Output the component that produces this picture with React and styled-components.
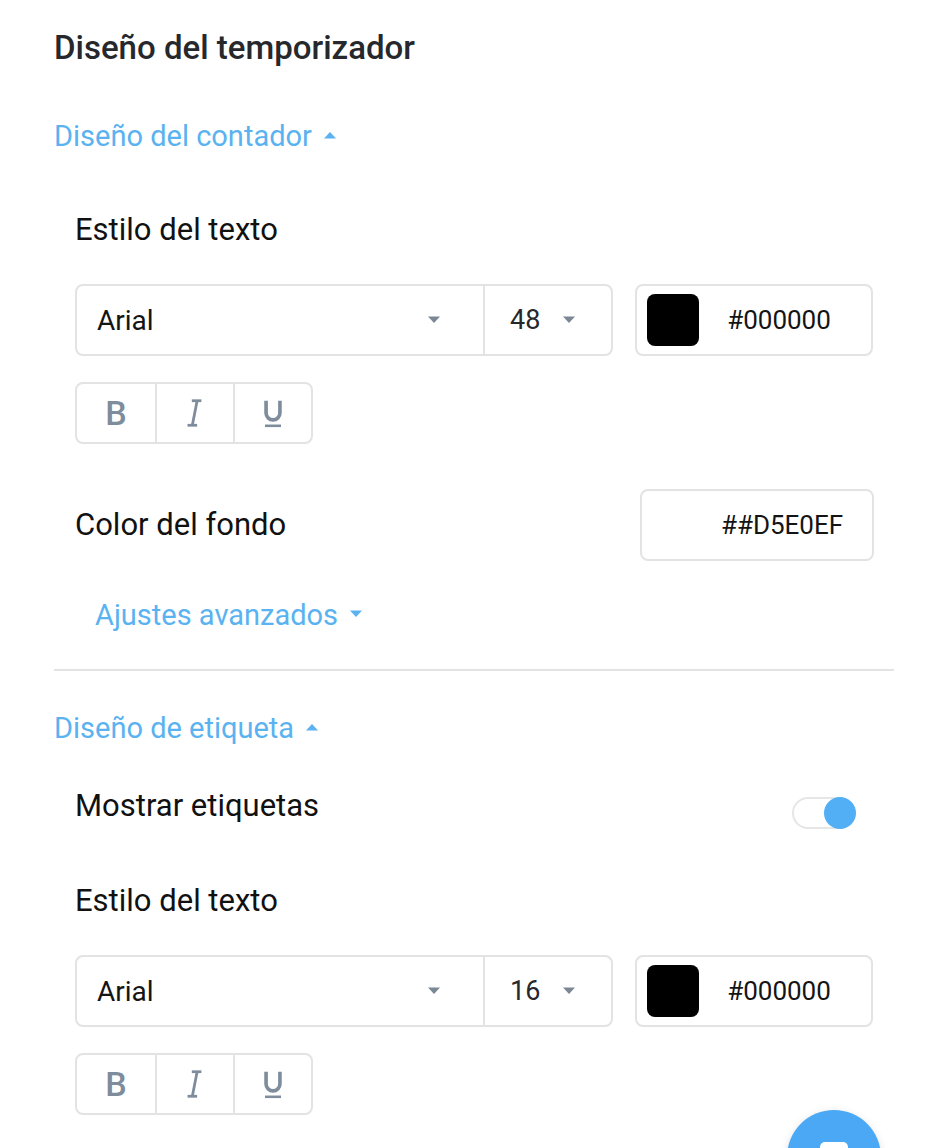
import React, { useState } from 'react'
import styled, { createGlobalStyle } from 'styled-components'

const GlobalStyle = createGlobalStyle`
	body {
		margin: 0;
		background: #ffffff;
		font-family: Roboto, "Liberation Sans", sans-serif;
		color: #141414;
	}
`

function Caret({ up, color }) {
	return (
		<svg width="14" height="8" viewBox="0 0 14 8">
			{up ? (
				<path d="M1 7.5 L7 1 L13 7.5 Z" fill={color} />
			) : (
				<path d="M1 0.5 L13 0.5 L7 7 Z" fill={color} />
			)}
		</svg>
	)
}

function ItalicIcon() {
	return (
		<svg width="32" height="32" viewBox="0 0 30 30" fill="none" stroke="#7e8c9c" strokeWidth="2.6">
			<path d="M12 3.5 H21" />
			<path d="M8 26.5 H17" />
			<path d="M17 3.5 L12.5 26.5" />
		</svg>
	)
}

function UnderlineIcon() {
	return (
		<svg width="32" height="32" viewBox="0 0 30 30" fill="none" stroke="#7e8c9c" strokeWidth="3.4">
			<path d="M8.5 3.5 V15 a6.5 6.5 0 0 0 13 0 V3.5" />
			<path d="M7.5 27 H22.5" strokeWidth="2.4" />
		</svg>
	)
}

function FontRow({ size }) {
	return (
		<StyledRow>
			<StyledSelectGroup>
				<StyledSelect>
					<span>Arial</span>
					<Caret color="#7c8795" />
				</StyledSelect>
				<StyledSizeSelect>
					<span>{size}</span>
					<Caret color="#7c8795" />
				</StyledSizeSelect>
			</StyledSelectGroup>
			<StyledColorBox width={238}>
				<StyledSwatch color="#000000" />
				<StyledColorText>#000000</StyledColorText>
			</StyledColorBox>
		</StyledRow>
	)
}

function FormatButtons() {
	return (
		<StyledFormatGroup>
			<StyledFormatButton>B</StyledFormatButton>
			<StyledFormatButton>
				<ItalicIcon />
			</StyledFormatButton>
			<StyledFormatButton>
				<UnderlineIcon />
			</StyledFormatButton>
		</StyledFormatGroup>
	)
}

function App() {
	const [showLabels, setShowLabels] = useState(true)
	return (
		<StyledPage>
			<GlobalStyle />
			<StyledTitle>Diseño del temporizador</StyledTitle>

			<StyledToggleHead top={50}>
				Diseño del contador <Caret up color="#5ab3f0" />
			</StyledToggleHead>
			<StyledBody>
				<StyledLabel top={58}>Estilo del texto</StyledLabel>
				<FontRow size="48" />
				<FormatButtons />
				<StyledBgRow>
					<StyledLabel top={0}>Color del fondo</StyledLabel>
					<StyledColorBox width={234}>
						<StyledSwatch color="transparent" />
						<StyledColorText>##D5E0EF</StyledColorText>
					</StyledColorBox>
				</StyledBgRow>
				<StyledAdvanced>
					Ajustes avanzados <Caret color="#5ab3f0" />
				</StyledAdvanced>
			</StyledBody>

			<StyledDivider />

			<StyledToggleHead top={39}>
				Diseño de etiqueta <Caret up color="#5ab3f0" />
			</StyledToggleHead>
			<StyledBody>
				<StyledSwitchRow>
					<StyledLabel top={0}>Mostrar etiquetas</StyledLabel>
					<StyledSwitch
						on={showLabels}
						onClick={() => setShowLabels(!showLabels)}
					>
						<StyledKnob on={showLabels} />
					</StyledSwitch>
				</StyledSwitchRow>
				<StyledLabel top={54}>Estilo del texto</StyledLabel>
				<FontRow size="16" />
				<FormatButtons />
			</StyledBody>

			<StyledFab>
				<StyledFabIcon />
			</StyledFab>
		</StyledPage>
	)
}

const StyledPage = styled.div`
	position: relative;
	width: 948px;
	height: 1148px;
	box-sizing: border-box;
	padding: 28px 54px 0 54px;
	overflow: hidden;
`
const StyledTitle = styled.div`
	font-size: 33px;
	line-height: 40px;
	font-weight: 500;
	color: #26282c;
`
const StyledToggleHead = styled.div`
	margin-top: ${(p) => p.top}px;
	display: flex;
	align-items: center;
	gap: 11px;
	font-size: 29px;
	line-height: 36px;
	color: #5ab3f0;
	cursor: pointer;
	svg {
		margin-top: -3px;
	}
`
const StyledBody = styled.div`
	padding: 0 20px 0 21px;
`
const StyledLabel = styled.div`
	margin-top: ${(p) => p.top}px;
	font-size: 31px;
	line-height: 36px;
	color: #111111;
`
const StyledRow = styled.div`
	margin-top: 36px;
	display: flex;
	gap: 22px;
	height: 72px;
`
const StyledSelectGroup = styled.div`
	width: 538px;
	box-sizing: border-box;
	display: flex;
	border: 2px solid #e3e3e3;
	border-radius: 8px;
`
const StyledSelect = styled.div`
	flex: 1;
	display: flex;
	align-items: center;
	justify-content: space-between;
	padding: 0 42px 0 20px;
	font-size: 28px;
	color: #141414;
	border-right: 2px solid #e3e3e3;
`
const StyledSizeSelect = styled.div`
	width: 126px;
	box-sizing: border-box;
	display: flex;
	align-items: center;
	gap: 22px;
	padding-left: 25px;
	font-size: 27px;
	color: #26282c;
`
const StyledColorBox = styled.div`
	width: ${(p) => p.width}px;
	height: 72px;
	box-sizing: border-box;
	display: flex;
	align-items: center;
	padding: 0 12px 0 10px;
	border: 2px solid #e3e3e3;
	border-radius: 8px;
`
const StyledSwatch = styled.div`
	width: 52px;
	height: 52px;
	border-radius: 8px;
	background: ${(p) => p.color};
	flex-shrink: 0;
`
const StyledColorText = styled.div`
	flex: 1;
	text-align: center;
	font-size: 26px;
	color: #141414;
`
const StyledFormatGroup = styled.div`
	margin-top: 26px;
	display: inline-flex;
	height: 62px;
	box-sizing: border-box;
	border: 2px solid #e3e3e3;
	border-radius: 8px;
`
const StyledFormatButton = styled.button`
	width: 78px;
	height: 100%;
	display: flex;
	align-items: center;
	justify-content: center;
	border: none;
	background: transparent;
	border-left: 2px solid #e3e3e3;
	padding: 0;
	color: #7e8c9c;
	font-size: 34px;
	font-family: Roboto, sans-serif;
	font-weight: 500;
	cursor: pointer;
	&:first-child {
		border-left: none;
	}
`
const StyledBgRow = styled.div`
	margin-top: 45px;
	display: flex;
	align-items: center;
	justify-content: space-between;
`
const StyledAdvanced = styled(StyledToggleHead)`
	margin-top: 36px;
	padding-left: 20px;
	gap: 11px;
`
const StyledDivider = styled.div`
	margin-top: 36px;
	height: 2px;
	background: #e3e3e3;
`
const StyledSwitchRow = styled.div`
	margin-top: 42px;
	display: flex;
	align-items: flex-start;
	justify-content: space-between;
`
const StyledSwitch = styled.div`
	position: relative;
	margin-top: 9px;
	margin-right: 20px;
	width: 62px;
	height: 32px;
	box-sizing: border-box;
	border: 2px solid #e6e6e6;
	border-radius: 16px;
	background: #ffffff;
	cursor: pointer;
`
const StyledKnob = styled.div`
	position: absolute;
	top: -2px;
	left: ${(p) => (p.on ? '30px' : '-2px')};
	width: 32px;
	height: 32px;
	border-radius: 50%;
	background: #52aff5;
`
const StyledFab = styled.div`
	position: absolute;
	left: 787px;
	top: 1110px;
	width: 94px;
	height: 94px;
	border-radius: 50%;
	background: #4ba8f4;
	box-shadow: 0 2px 8px rgba(0, 0, 0, 0.12);
	display: flex;
	justify-content: center;
`
const StyledFabIcon = styled.div`
	margin-top: 32px;
	width: 28px;
	height: 24px;
	border-radius: 5px;
	background: #ffffff;
`

export default App
